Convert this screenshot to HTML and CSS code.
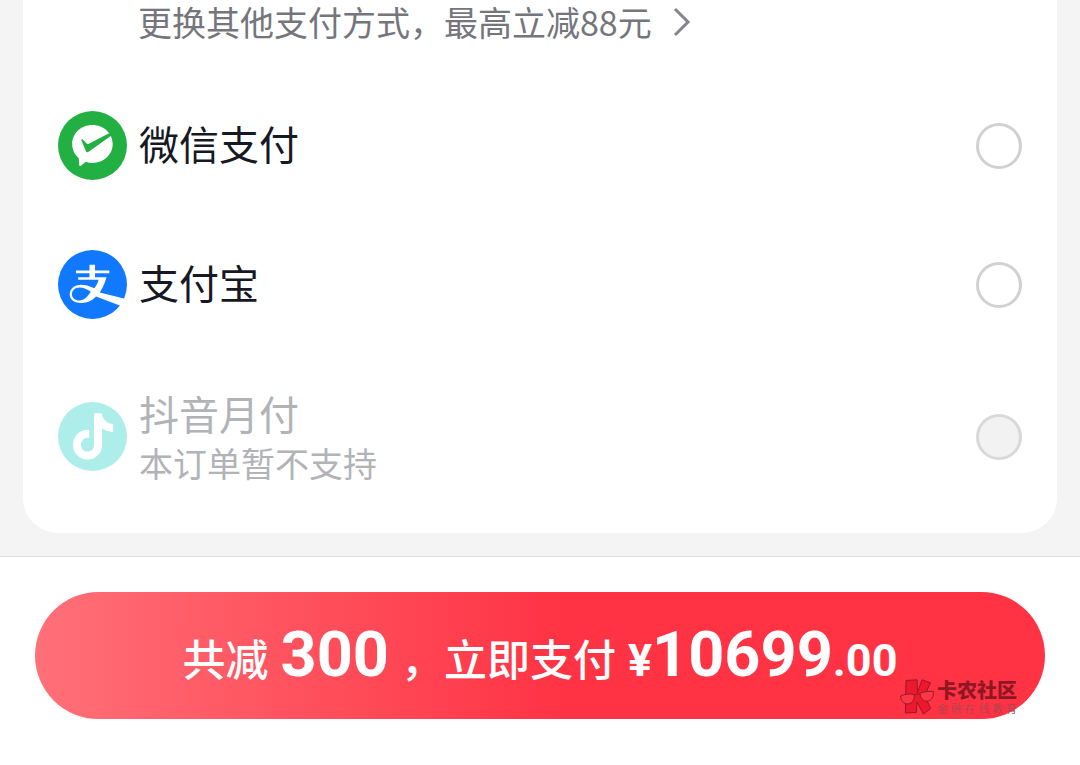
FILE: index.html
```html
<!DOCTYPE html>
<html lang="zh-CN">
<head>
<meta charset="utf-8">
<meta name="viewport" content="width=device-width, initial-scale=1">
<title>支付</title>
<link rel="stylesheet" href="styles.css">
</head>
<body>
<div class="page">
  <main class="card">
    <a class="promo" href="#">更换其他支付方式，最高立减88元
      <svg class="chevron" viewBox="0 0 18 30" aria-hidden="true"><path d="M2 2 L15 15 L2 28"/></svg>
    </a>
    <label class="method">
      <svg class="logo" viewBox="0 0 69 69" aria-hidden="true">
        <circle cx="34.5" cy="34.5" r="34.5" fill="#23b043"/>
        <path fill="#fff" d="M34.4 14C23 14 14.200 22.500 14.200 33c0 5.800 2.400 10.600 6.600 14.200l.4 6.700c0 1 .8 1.400 1.600.8l5-4c2 .8 4.300 1.200 6.600 1.200 11.400 0 20.300-8.400 20.300-18.900S45.800 14 34.400 14z"/>
        <path fill="#23b043" d="M23.300 29.300c0-1.100.8-1.300 1.700-.6l3.300 3.600c.8.700 1.600.8 2.600.4L51 22.300h2.500v2.300L30.600 40.700c-1.400.9-2.200.6-2.700-.8z"/>
      </svg>
      <span class="name">微信支付</span>
      <input class="radio" type="radio" name="method" value="wechat">
    </label>
    <label class="method">
      <svg class="logo" viewBox="0 0 69 69" aria-hidden="true">
        <circle cx="34.5" cy="34.5" r="34.5" fill="#1179ff"/>
        <path fill="#fff" d="M31.500 14.800h5.500v5.800H51.300v2.700H37v4h11.500C46.500 34 44.500 38.500 41.800 42.400l26 6.600-4.800 7-25-9.500C34 51 28.500 53 22.500 53 16 53 11.700 49.400 11.700 44.500c0-5.700 4.800-9.800 11.300-9.800 5 0 9 1.600 13.300 3.600 2-2.700 3.500-5.400 4.300-8.600H20.200v-2.400h11.300v-4H18v-2.700h13.500z"/>
        <path fill="#1179ff" d="M32.800 41.800c-3.800-2.600-7.100-4.300-11-4.300-4.600 0-7.900 2.900-7.900 6.700 0 3.700 3 6.300 7.600 6.300 4.600 0 8-3.800 11.300-8.700z"/>
      </svg>
      <span class="name">支付宝</span>
      <input class="radio" type="radio" name="method" value="alipay">
    </label>
    <label class="method method-disabled">
      <svg class="logo" viewBox="0 0 69 69" aria-hidden="true">
        <circle cx="34.500" cy="34.500" r="34.500" fill="#aeeeea"/>
        <path fill="#fff" d="M36 11.200h8c.5 6 5 10.400 11.200 10.700v8c-4.200 0-8.100-1.300-11.200-3.600v16.500c0 8.700-6.200 14.700-14.500 14.700S15 51.300 15 42.800c0-8.800 7-15.500 16.200-15v8c-4.700-.7-8.200 2.300-8.200 6.900 0 4 2.900 7 6.600 7 3.900 0 6.400-2.800 6.400-7.100z"/>
      </svg>
      <span class="name">抖音月付<small class="note">本订单暂不支持</small></span>
      <input class="radio" type="radio" name="method" value="douyin" disabled>
    </label>
  </main>
  <footer class="footer">
    <button class="pay" type="button">
      <span>共减</span>
      <span class="amount">300</span>
      <span>，立即支付</span>
      <span class="price"><span class="yen">¥</span><span class="amount">10699</span><span class="cents">.00</span></span>
    </button>
    <div class="mark">
      <svg class="mark-logo" viewBox="0 0 34 36" aria-hidden="true">
        <g fill="#ec182e" stroke="#98192a" stroke-width="1" stroke-linejoin="round">
          <path d="M6 1.500 17 .8l.5 12.700L22 .8l8.500 3-6 13 6.300 12.700-7.500 5.500L17 23l-.6 10.500-11 .5z"/>
          <path d="M.6 17c4-2 9-2.500 13.400-1.500 1 5-2 9.500-6.500 9.500-4 0-6.700-3.500-6.900-8zM20 14.500c4-2 9-2.600 13.300-2 .7 5-2 9.700-6.300 9.700-4 0-6.800-3.200-7-7.700z" fill="#fc3746"/>
          <path d="M14 16.500c2-1.700 4-2 6-1.300" fill="none"/>
        </g>
      </svg>
      <div class="mark-text"><span class="mark-title">卡农社区</span><span class="mark-sub">金融在线教育</span></div>
    </div>
  </footer>
</div>
</body>
</html>
```
FILE: styles.css
```css
* { box-sizing: border-box; }

body {
  margin: 0;
  background: #f4f4f4;
  color: #161823;
  font-family: "Noto Sans CJK SC", sans-serif;
}

.page {
  display: flex;
  flex-direction: column;
  min-height: 100vh;
}

.card {
  margin: 0 23px 23px;
  padding: 0 35px 14px;
  background: #fff;
  border-radius: 0 0 35px 35px;
}

.promo {
  display: flex;
  align-items: center;
  gap: 21px;
  padding: 0 0 33px 80px;
  color: #75767d;
  font-size: 34px;
  line-height: 43px;
  text-decoration: none;
}

.chevron {
  width: 18px;
  height: 30px;
  fill: none;
  stroke: #85868c;
  stroke-width: 3;
}

.method {
  display: flex;
  align-items: center;
  gap: 12px;
  min-height: 139px;
}

.method-disabled {
  min-height: 165px;
  color: #b2b3b7;
}

.logo {
  flex: none;
  width: 69px;
  height: 69px;
}

.name {
  flex: 1;
  padding-bottom: 4px;
  font-size: 40px;
  line-height: 49px;
}

.method-disabled .name { padding: 3px 0 0; }

.note {
  display: block;
  font-size: 34px;
}

.radio {
  appearance: none;
  flex: none;
  width: 46px;
  height: 46px;
  margin: 0;
  border: 3px solid #d0d1d2;
  border-radius: 50%;
  background: #fff;
}

.radio:checked { border: 14px solid #fe3345; }

.radio:disabled {
  border-color: #d8d9da;
  background: #f2f2f2;
}

.footer {
  position: relative;
  flex: 1;
  padding: 35px 35px 46px;
  border-top: 1px solid #e0e0e0;
  background: #fff;
}

.pay {
  display: flex;
  align-items: baseline;
  justify-content: center;
  gap: 12px;
  width: 100%;
  height: 127px;
  padding: 20px 0;
  border: 0;
  border-radius: 64px;
  background: linear-gradient(90deg, #ff7078 0%, #ff3344 52%);
  color: #fff;
  font-family: inherit;
  font-size: 43px;
  font-weight: 500;
  line-height: 86px;
  white-space: nowrap;
}

.amount {
  font-family: Roboto, sans-serif;
  font-size: 63px;
  font-weight: 700;
}

.yen,
.cents {
  font-family: Roboto, sans-serif;
  font-size: 45px;
  font-weight: 700;
}

.mark {
  position: absolute;
  right: 63px;
  bottom: 50px;
  display: flex;
  align-items: center;
  gap: 3px;
}

.mark-logo {
  width: 34px;
  height: 36px;
}

.mark-text {
  display: flex;
  flex-direction: column;
  width: 80px;
}

.mark-title {
  color: #8f1725;
  font-size: 20px;
  font-weight: 900;
  line-height: 22px;
}

.mark-sub {
  color: #b3434f;
  font-size: 11px;
  line-height: 14px;
  text-align-last: justify;
}
```
